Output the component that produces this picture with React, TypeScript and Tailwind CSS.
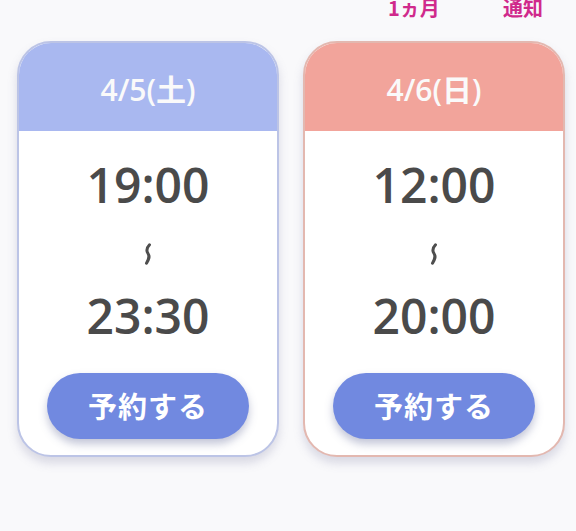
import React from "react";

const font = { fontFamily: '"Open Sans", "Noto Sans CJK JP", sans-serif' };

function Wave() {
  return (
    <svg width="10" height="22" viewBox="0 0 10 22" className="block">
      <path d="M6.5 1.8 C3.5 5, 3 7.5, 5 10.5 S 6 16, 3.5 20.2" stroke="#4e4e4e" strokeWidth="3" fill="none" strokeLinecap="round" />
    </svg>
  );
}

function Card({ date, start, end, head, border }: { date: string; start: string; end: string; head: string; border: string }) {
  return (
    <div className={`w-[262px] h-[416px] rounded-[34px] border-2 ${border} overflow-hidden bg-white shadow-[0_6px_10px_rgba(120,120,160,0.25)] flex flex-col`}>
      <div className={`h-[88px] ${head} flex items-center justify-center pt-[4px] text-[#fafafa] text-[30px] font-semibold`}>{date}</div>
      <div className="flex flex-col items-center">
        <div className="mt-[30px] h-[48px] leading-[48px] text-[48px] font-semibold text-[#4a4a4a]">{start}</div>
        <div className="mt-[34px] h-[22px]"><Wave /></div>
        <div className="mt-[27px] h-[48px] leading-[48px] text-[48px] font-semibold text-[#4a4a4a]">{end}</div>
        <div className="mt-[33px] w-[202px] h-[66px] rounded-full bg-[#7189e0] shadow-[0_5px_8px_rgba(80,90,140,0.35)] flex items-center justify-center text-white text-[29px] font-semibold tracking-[1px]" style={{ fontFamily: '"Noto Sans CJK JP", sans-serif' }}>予約する</div>
      </div>
    </div>
  );
}

export default function App() {
  return (
    <div className="w-[576px] h-[531px] bg-[#f9f9fb] overflow-hidden" style={font}>
      <div className="relative h-[41px]" style={{ fontFamily: '"Noto Sans CJK JP", sans-serif' }}>
        <div className="absolute left-[388px] top-[-5px] text-[20px] font-bold text-[#d02a8c] leading-[26px]">1ヵ月</div>
        <div className="absolute left-[503px] top-[-5px] text-[20px] font-bold text-[#d02a8c] leading-[26px]">通知</div>
      </div>
      <div className="flex gap-[24px] pl-[17px]">
        <Card date="4/5(土)" start="19:00" end="23:30" head="bg-[#a9b8f0]" border="border-[#bcc4e6]" />
        <Card date="4/6(日)" start="12:00" end="20:00" head="bg-[#f2a49b]" border="border-[#e3b8b0]" />
      </div>
    </div>
  );
}
